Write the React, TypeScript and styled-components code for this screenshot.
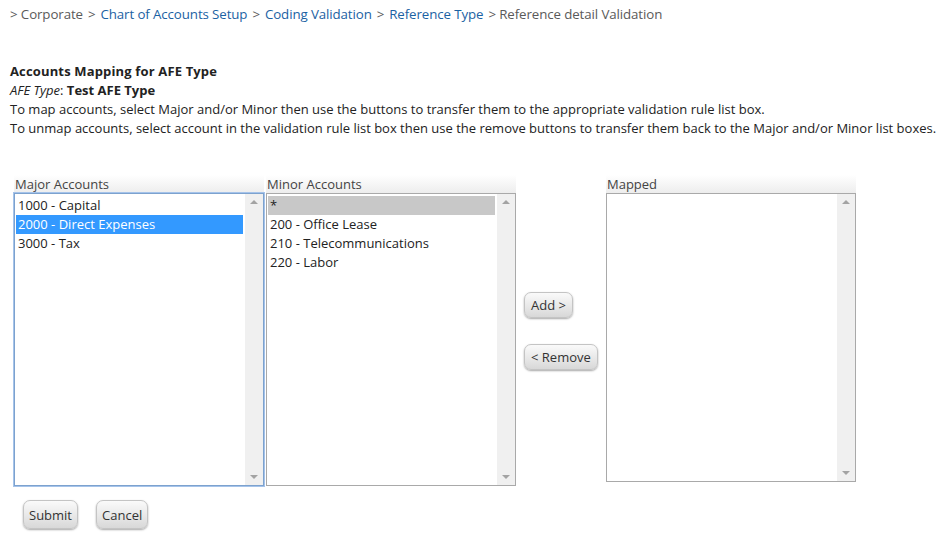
import styled, { createGlobalStyle } from 'styled-components';

const GlobalStyle = createGlobalStyle`
  body {
    margin: 0;
    background: #ffffff;
    font-family: 'Open Sans', 'Noto Sans', sans-serif;
    font-size: 13px;
    color: #222;
  }
`;

const Page = styled.div`
  width: 951px;
  height: 536px;
  padding: 0 10px;
  box-sizing: border-box;
  overflow: hidden;
`;

const Crumbs = styled.div`
  display: flex;
  gap: 5px;
  height: 28px;
  align-items: center;
  font-size: 13.3px;
  color: #555;
  letter-spacing: -0.1px;
`;

const Crumb = styled.span<{ $link?: boolean }>`
  color: ${(p) => (p.$link ? '#1b62a3' : '#5a5a5a')};
`;

const Intro = styled.div`
  margin-top: 34px;
  line-height: 19px;
  font-size: 13px;
`;

const Title = styled.div`
  font-weight: bold;
  letter-spacing: 0.15px;
`;

const Lists = styled.div`
  display: flex;
  margin-top: 37px;
  padding-left: 4px;
  gap: 2px;
`;

const Column = styled.div`
  display: flex;
  flex-direction: column;
  width: 250px;
`;

const Header = styled.div`
  height: 18px;
  line-height: 18px;
  padding-left: 1px;
  color: #444;
  font-size: 13px;
  background: linear-gradient(#ffffff, #ededed);
`;

const Box = styled.div<{ $focus?: boolean; $h: number }>`
  display: flex;
  height: ${(p) => p.$h}px;
  box-sizing: border-box;
  border: 1px solid ${(p) => (p.$focus ? '#7da2ce' : '#a9a9a9')};
  box-shadow: ${(p) => (p.$focus ? '0 0 0 1px #a5c3ea' : 'none')};
  background: #fff;
`;

const Items = styled.div`
  flex: 1;
  padding: 2px 2px 0 1px;
`;

const Item = styled.div<{ $sel?: 'blue' | 'gray' }>`
  height: 19px;
  line-height: 19px;
  padding-left: 2px;
  font-size: 13px;
  color: ${(p) => (p.$sel === 'blue' ? '#fff' : '#222')};
  background: ${(p) =>
    p.$sel === 'blue' ? '#3399ff' : p.$sel === 'gray' ? '#c8c8c8' : 'transparent'};
`;

const Scroll = styled.div`
  width: 18px;
  background: #f0f0f0;
  display: flex;
  flex-direction: column;
  justify-content: space-between;
  align-items: center;
  padding: 6px 0;
`;

const Arrow = styled.div<{ $down?: boolean }>`
  width: 0;
  height: 0;
  border-left: 4px solid transparent;
  border-right: 4px solid transparent;
  ${(p) =>
    p.$down ? 'border-top: 4px solid #a3a3a3;' : 'border-bottom: 4px solid #a3a3a3;'}
`;

const Middle = styled.div`
  width: 86px;
  box-sizing: border-box;
  display: flex;
  flex-direction: column;
  align-items: flex-start;
  gap: 26px;
  padding-top: 117px;
  padding-left: 6px;
`;

const Btn = styled.button`
  font-family: 'Open Sans', 'Noto Sans', sans-serif;
  font-size: 13px;
  color: #333;
  height: 26px;
  padding: 0 6px;
  border: 1px solid #c4c4c4;
  border-radius: 7px;
  background: linear-gradient(#fafafa, #e6e6e6 60%, #d8d8d8);
  box-shadow: 0 1px 2px rgba(0, 0, 0, 0.35);
  cursor: pointer;
`;

const Footer = styled.div`
  display: flex;
  gap: 18px;
  margin-top: 14px;
  padding-left: 13px;

  ${Btn} {
    height: 29px;
    padding: 0 5px;
  }
`;

type ListProps = {
  title: string;
  items: { label: string; sel?: 'blue' | 'gray' }[];
  focus?: boolean;
  h: number;
};

function ListBox({ title, items, focus, h }: ListProps) {
  return (
    <Column>
      <Header>{title}</Header>
      <Box $focus={focus} $h={h}>
        <Items>
          {items.map((it) => (
            <Item key={it.label} $sel={it.sel}>
              {it.label}
            </Item>
          ))}
        </Items>
        <Scroll>
          <Arrow />
          <Arrow $down />
        </Scroll>
      </Box>
    </Column>
  );
}

export default function App() {
  return (
    <Page>
      <GlobalStyle />
      <Crumbs>
        <Crumb>&gt; Corporate</Crumb>
        <Crumb>&gt;</Crumb>
        <Crumb $link>Chart of Accounts Setup</Crumb>
        <Crumb>&gt;</Crumb>
        <Crumb $link>Coding Validation</Crumb>
        <Crumb>&gt;</Crumb>
        <Crumb $link>Reference Type</Crumb>
        <Crumb>&gt; Reference detail Validation</Crumb>
      </Crumbs>
      <Intro>
        <Title>Accounts Mapping for AFE Type</Title>
        <div>
          <i>AFE Type</i>: <b>Test AFE Type</b>
        </div>
        <div>
          To map accounts, select Major and/or Minor then use the buttons to transfer them to the
          appropriate validation rule list box.
        </div>
        <div>
          To unmap accounts, select account in the validation rule list box then use the remove
          buttons to transfer them back to the Major and/or Minor list boxes.
        </div>
      </Intro>
      <Lists>
        <ListBox
          title="Major Accounts"
          focus
          h={293}
          items={[
            { label: '1000 - Capital' },
            { label: '2000 - Direct Expenses', sel: 'blue' },
            { label: '3000 - Tax' },
          ]}
        />
        <ListBox
          title="Minor Accounts"
          h={293}
          items={[
            { label: '*', sel: 'gray' },
            { label: '200 - Office Lease' },
            { label: '210 - Telecommunications' },
            { label: '220 - Labor' },
          ]}
        />
        <Middle>
          <Btn>Add &gt;</Btn>
          <Btn>&lt; Remove</Btn>
        </Middle>
        <ListBox title="Mapped" h={289} items={[]} />
      </Lists>
      <Footer>
        <Btn>Submit</Btn>
        <Btn>Cancel</Btn>
      </Footer>
    </Page>
  );
}
